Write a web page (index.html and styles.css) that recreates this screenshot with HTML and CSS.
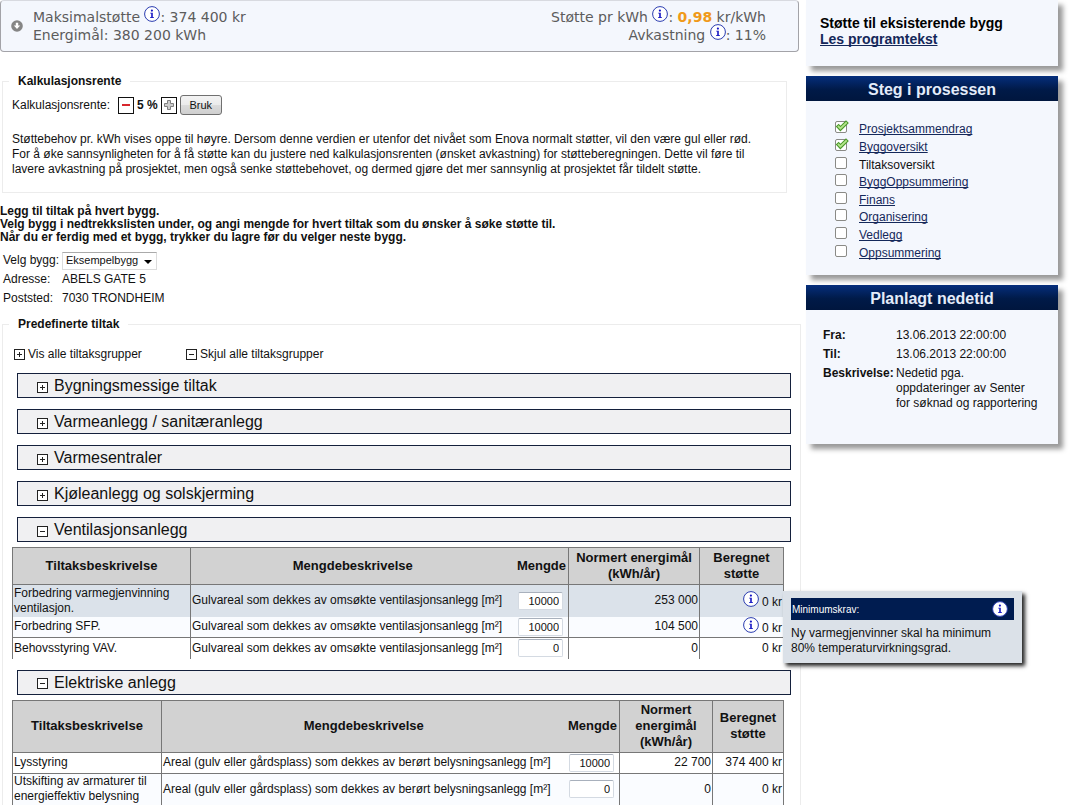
FILE: index.html
```html
<!DOCTYPE html>
<html lang="no">
<head>
<meta charset="utf-8">
<title>Tiltaksoversikt</title>
<link rel="stylesheet" href="styles.css">
</head>
<body>
<svg class="defs" aria-hidden="true">
  <symbol id="info" viewBox="0 0 16 16">
    <circle cx="8" cy="8" r="7.4" fill="#fff" stroke="#2a3cb0" stroke-width="1"/>
    <circle cx="7.9" cy="4.6" r="1.1" fill="#1414c4"/>
    <path d="M6.2 6.7H8.8V11.2H10V12H6V11.2H7.2V7.5H6.2Z" fill="#1414c4"/>
  </symbol>
  <symbol id="plus" viewBox="0 0 11 11">
    <rect x=".5" y=".5" width="10" height="10" fill="#fff" stroke="#222"/>
    <path d="M3 5.5H8M5.5 3V8" stroke="#222"/>
  </symbol>
  <symbol id="minus" viewBox="0 0 11 11">
    <rect x=".5" y=".5" width="10" height="10" fill="#fff" stroke="#222"/>
    <path d="M3 5.5H8" stroke="#222"/>
  </symbol>
  <symbol id="tick" viewBox="0 0 14 12">
    <path d="M2.2 5.2 5.4 8.6 12.4 1.6" fill="none" stroke="#4c9a2c" stroke-width="4"/>
    <path d="M2.9 5.9 5.4 8.4 11.7 2.3" fill="none" stroke="#b5e68c" stroke-width="1.8"/>
  </symbol>
</svg>

<main class="main">
  <section class="summary">
    <svg class="summary-toggle" viewBox="0 0 12 12"><circle cx="6" cy="6" r="5.8" fill="#858585"/><path d="M4.8 2.8H7.2V5.4H9.2L6 9 2.8 5.4H4.8Z" fill="#fff"/></svg>
    <div class="summary-left">
      <div>Maksimalstøtte <svg class="info"><use href="#info"/></svg>: 374 400 kr</div>
      <div>Energimål: 380 200 kWh</div>
    </div>
    <div class="summary-right">
      <div>Støtte pr kWh <svg class="info"><use href="#info"/></svg>: <strong class="rate">0,98</strong> kr/kWh</div>
      <div>Avkastning <svg class="info"><use href="#info"/></svg>: 11%</div>
    </div>
  </section>

  <fieldset class="box box-rate">
    <legend>Kalkulasjonsrente</legend>
    <div class="rate-row">
      <span class="rate-label">Kalkulasjonsrente:</span>
      <button class="step" type="button" aria-label="Reduser"><svg viewBox="0 0 14 14"><path d="M3 7H11" stroke="#d8262c" stroke-width="2"/></svg></button>
      <strong>5 %</strong>
      <button class="step" type="button" aria-label="Øk"><svg viewBox="0 0 14 14"><path d="M5.5 2.5H8.5V5.5H11.5V8.5H8.5V11.5H5.5V8.5H2.5V5.5H5.5Z" fill="#ccc" stroke="#808080"/></svg></button>
      <button class="apply" type="button">Bruk</button>
    </div>
    <p class="help">Støttebehov pr. kWh vises oppe til høyre. Dersom denne verdien er utenfor det nivået som Enova normalt støtter, vil den være gul eller rød.<br>For å øke sannsynligheten for å få støtte kan du justere ned kalkulasjonsrenten (ønsket avkastning) for støtteberegningen. Dette vil føre til<br>lavere avkastning på prosjektet, men også senke støttebehovet, og dermed gjøre det mer sannsynlig at prosjektet får tildelt støtte.</p>
  </fieldset>

  <p class="intro">Legg til tiltak på hvert bygg.<br>Velg bygg i nedtrekkslisten under, og angi mengde for hvert tiltak som du ønsker å søke støtte til.<br>Når du er ferdig med et bygg, trykker du lagre før du velger neste bygg.</p>

  <div class="building">
    <label for="bygg">Velg bygg:</label>
    <span class="select"><select id="bygg"><option>Eksempelbygg</option></select></span>
    <span>Adresse:</span><span>ABELS GATE 5</span>
    <span>Poststed:</span><span>7030 TRONDHEIM</span>
  </div>

  <fieldset class="box box-measures">
    <legend>Predefinerte tiltak</legend>
    <div class="toggle-all">
      <button type="button"><svg class="pm"><use href="#plus"/></svg>Vis alle tiltaksgrupper</button>
      <button type="button"><svg class="pm"><use href="#minus"/></svg>Skjul alle tiltaksgrupper</button>
    </div>
    <div class="groups">
      <button class="group" type="button"><svg class="pm"><use href="#plus"/></svg>Bygningsmessige tiltak</button>
      <button class="group" type="button"><svg class="pm"><use href="#plus"/></svg>Varmeanlegg / sanitæranlegg</button>
      <button class="group" type="button"><svg class="pm"><use href="#plus"/></svg>Varmesentraler</button>
      <button class="group" type="button"><svg class="pm"><use href="#plus"/></svg>Kjøleanlegg og solskjerming</button>
      <button class="group" type="button"><svg class="pm"><use href="#minus"/></svg>Ventilasjonsanlegg</button>
    </div>

    <table class="measures vent">
      <colgroup><col class="c-name"><col><col class="c-qty"><col class="c-goal"><col class="c-sum"></colgroup>
      <thead>
        <tr><th>Tiltaksbeskrivelse</th><th class="wide">Mengdebeskrivelse</th><th class="qty">Mengde</th><th>Normert energimål (kWh/år)</th><th>Beregnet støtte</th></tr>
      </thead>
      <tbody>
        <tr class="tall active">
          <td>Forbedring varmegjenvinning ventilasjon.</td>
          <td><label for="q1">Gulvareal som dekkes av omsøkte ventilasjonsanlegg [m²]</label></td>
          <td class="qty"><input id="q1" type="text" value="10000"></td>
          <td class="num">253 000</td>
          <td class="num tip-host"><svg class="info"><use href="#info"/></svg> 0 kr
            <div class="tip" role="tooltip">
              <div class="tip-head"><span>Minimumskrav:</span><svg class="tip-info"><use href="#info"/></svg></div>
              <p>Ny varmegjenvinner skal ha minimum 80% temperaturvirkningsgrad.</p>
            </div>
          </td>
        </tr>
        <tr class="alt joined">
          <td>Forbedring SFP.</td>
          <td><label for="q2">Gulvareal som dekkes av omsøkte ventilasjonsanlegg [m²]</label></td>
          <td class="qty"><input id="q2" type="text" value="10000"></td>
          <td class="num">104 500</td>
          <td class="num"><svg class="info"><use href="#info"/></svg> 0 kr</td>
        </tr>
        <tr class="last">
          <td>Behovsstyring VAV.</td>
          <td><label for="q3">Gulvareal som dekkes av omsøkte ventilasjonsanlegg [m²]</label></td>
          <td class="qty"><input id="q3" type="text" value="0"></td>
          <td class="num">0</td>
          <td class="num">0 kr</td>
        </tr>
      </tbody>
    </table>

    <div class="groups">
      <button class="group" type="button"><svg class="pm"><use href="#minus"/></svg>Elektriske anlegg</button>
    </div>

    <table class="measures elek">
      <colgroup><col class="c-name"><col><col class="c-qty"><col class="c-goal"><col class="c-sum"></colgroup>
      <thead>
        <tr><th>Tiltaksbeskrivelse</th><th class="wide">Mengdebeskrivelse</th><th class="qty">Mengde</th><th>Normert energimål (kWh/år)</th><th>Beregnet støtte</th></tr>
      </thead>
      <tbody>
        <tr>
          <td>Lysstyring</td>
          <td><label for="q4">Areal (gulv eller gårdsplass) som dekkes av berørt belysningsanlegg [m²]</label></td>
          <td class="qty"><input id="q4" type="text" value="10000"></td>
          <td class="num">22 700</td>
          <td class="num">374 400 kr</td>
        </tr>
        <tr class="tall alt last">
          <td>Utskifting av armaturer til energieffektiv belysning</td>
          <td><label for="q5">Areal (gulv eller gårdsplass) som dekkes av berørt belysningsanlegg [m²]</label></td>
          <td class="qty"><input id="q5" type="text" value="0"></td>
          <td class="num">0</td>
          <td class="num">0 kr</td>
        </tr>
      </tbody>
    </table>
  </fieldset>
</main>

<aside class="side">
  <section class="panel program">
    <strong>Støtte til eksisterende bygg</strong>
    <a href="#">Les programtekst</a>
  </section>

  <section class="panel">
    <h2>Steg i prosessen</h2>
    <ul class="steps">
      <li><span class="check"><input type="checkbox" id="s1" aria-label="Prosjektsammendrag" checked><svg><use href="#tick"/></svg></span><a href="#">Prosjektsammendrag</a></li>
      <li><span class="check"><input type="checkbox" id="s2" aria-label="Byggoversikt" checked><svg><use href="#tick"/></svg></span><a href="#">Byggoversikt</a></li>
      <li><span class="check"><input type="checkbox" id="s3"></span><label for="s3">Tiltaksoversikt</label></li>
      <li><span class="check"><input type="checkbox" id="s4" aria-label="ByggOppsummering"></span><a href="#">ByggOppsummering</a></li>
      <li><span class="check"><input type="checkbox" id="s5" aria-label="Finans"></span><a href="#">Finans</a></li>
      <li><span class="check"><input type="checkbox" id="s6" aria-label="Organisering"></span><a href="#">Organisering</a></li>
      <li><span class="check"><input type="checkbox" id="s7" aria-label="Vedlegg"></span><a href="#">Vedlegg</a></li>
      <li><span class="check"><input type="checkbox" id="s8" aria-label="Oppsummering"></span><a href="#">Oppsummering</a></li>
    </ul>
  </section>

  <section class="panel">
    <h2>Planlagt nedetid</h2>
    <dl class="downtime">
      <dt>Fra:</dt><dd>13.06.2013 22:00:00</dd>
      <dt>Til:</dt><dd>13.06.2013 22:00:00</dd>
      <dt>Beskrivelse:</dt><dd>Nedetid pga.<br>oppdateringer av Senter<br>for søknad og rapportering</dd>
    </dl>
  </section>
</aside>
</body>
</html>
```
FILE: styles.css
```css
* { box-sizing: border-box; }

body {
  margin: 0;
  display: flex;
  align-items: flex-start;
  gap: 5px;
  padding-right: 15px;
  background: #fff;
  color: #111;
  font: 12px/15px "Liberation Sans", Arial, sans-serif;
}

button, input, select { font: inherit; color: inherit; }
p, h2, ul, dl, dd { margin: 0; padding: 0; }
a { color: #14285a; text-decoration-skip-ink: none; }
.defs { position: absolute; width: 0; height: 0; }
.info { width: 16px; height: 16px; vertical-align: -1px; }
.pm { width: 11px; height: 11px; flex: none; }

.main { flex: 1; min-width: 0; }

/* Summary bar */
.summary {
  display: flex;
  align-items: center;
  height: 52px;
  margin-right: 2px;
  padding: 0 32px 0 10px;
  background: #f4f7fd;
  border: 1px solid #a3a3a8;
  border-top-color: #d8dae0;
  border-radius: 4px;
  color: #5c5c5c;
  font: 14px/18px "DejaVu Sans", Verdana, sans-serif;
}
.summary-toggle { width: 12px; height: 12px; margin-right: 10px; }
.summary-left { flex: 1; }
.summary-right { text-align: right; }
.rate { color: #f09a1a; }
.summary .info { vertical-align: 0; margin: -4px 0 0; }

/* Fieldsets */
.box {
  min-width: 0;
  margin: 0;
  border: 1px solid #ececec;
}
.box legend { margin-left: -3px; padding: 0 9px; font-weight: bold; }
.box-rate { margin: 22px 14px 0 2px; padding: 6px 9px 15px; }
.rate-row { display: flex; align-items: center; gap: 3px; height: 20px; }
.rate-label { margin-right: 5px; }
.step {
  width: 16px;
  height: 17px;
  padding: 0;
  border: 1px solid #111;
  background: #fff;
}
.step svg { display: block; width: 14px; height: 14px; }
.apply {
  width: 42px;
  height: 20px;
  padding: 0;
  border: 1px solid #707070;
  border-radius: 3px;
  background: linear-gradient(#f3f3f3, #ebebeb 50%, #dcdcdc 50%, #cfcfcf);
  font-size: 11px;
}
.help { margin-top: 17px; }

.intro { margin-top: 12px; font-weight: bold; line-height: 13px; }

.building {
  display: grid;
  grid-template-columns: 55px 1fr;
  column-gap: 4px;
  grid-auto-rows: 19px;
  align-items: center;
  margin: 7px 0 9px 3px;
  white-space: nowrap;
}
.select { position: relative; width: 95px; height: 18px; }
.select select {
  appearance: none;
  width: 100%;
  height: 18px;
  padding: 0 4px 0 3px;
  border: 1px solid #dcdcdc;
  border-top-color: #aaa;
  background: #fff;
  font-size: 11px;
}
.select::after {
  content: "";
  position: absolute;
  right: 5px;
  top: 8px;
  border: 4px solid transparent;
  border-top-color: #000;
  pointer-events: none;
}

/* Measures */
.box-measures { margin-left: 2px; padding: 0 9px; border-bottom: 0; }
.toggle-all {
  display: grid;
  grid-template-columns: 172px 1fr;
  margin: 15px 0 11px 2px;
}
.toggle-all button, .group {
  display: flex;
  align-items: center;
  border: 0;
  background: none;
  padding: 0;
}
.toggle-all button { gap: 3px; }
.groups { display: grid; gap: 11px; margin: 0 0 0 5px; }
.group {
  gap: 6px;
  height: 25px;
  padding: 0 19px;
  border: 1px solid #14203c;
  background: #f0f0f2;
  font-size: 16px;
}
.group .pm { margin-top: 3px; }

.measures {
  width: calc(100% - 7px);
  margin: 5px 0 11px;
  table-layout: fixed;
  border-collapse: collapse;
  border: 1px solid #777;
  border-bottom: 0;
}
.vent .c-name { width: 178px; }
.vent .c-goal { width: 131px; }
.vent .c-sum { width: 84px; }
.elek .c-name { width: 149px; }
.elek .c-goal { width: 93px; }
.elek .c-sum { width: 71px; }
.c-qty { width: 54px; }
.measures th {
  padding: 2px 1px;
  background: #d2d2d2;
  border: 1px solid #777;
  font-size: 13px;
  line-height: 16px;
}
.measures.elek th { padding: 1px 1px 2px; }
.measures td {
  height: 21px;
  padding: 0 1px;
  border: 1px solid #777;
}
.measures .tall td { height: 32px; }
.measures th.wide, .measures td:nth-child(2) { border-right: 0; white-space: nowrap; }
.measures .qty { border-left: 0; text-align: right; }
.measures th.qty { padding-right: 2px; }
.measures td.qty { padding-right: 5px; }
.measures td.num { text-align: right; white-space: nowrap; }
.measures .last td { border-bottom: 0; }
.measures .active td { background: #dbe2ea; border-bottom: 0; }
.alt td { background: #fafcff; }
.measures .joined td { border-top: 0; }
.measures input {
  display: block;
  width: 45px;
  height: 18px;
  margin-left: auto;
  padding: 0 3px;
  border: 1px solid #d4dae2;
  border-top-color: #a8b0bc;
  border-radius: 2px;
  background: #fff;
  font-size: 11px;
  text-align: right;
}

/* Tooltip */
.tip-host { position: relative; }
.tip {
  position: absolute;
  z-index: 2;
  left: 100%;
  top: 6px;
  width: 239px;
  padding: 7px 8px;
  background: #dbe1e8;
  box-shadow: 3px 3px 4px #222;
  text-align: left;
  white-space: normal;
}
.tip-head {
  display: flex;
  align-items: center;
  justify-content: space-between;
  height: 22px;
  margin-bottom: 6px;
  padding: 0 6px 0 1px;
  background: #001c50;
  color: #fff;
  font-size: 10px;
}
.tip-info { width: 16px; height: 16px; }

/* Side column */
.side { flex: none; width: 252px; display: grid; gap: 10px; }
.panel { background: #f4f7fd; box-shadow: 5px 5px 5px #999; }
.program {
  display: grid;
  align-content: start;
  height: 66px;
  padding: 15px 14px;
  font-size: 14px;
  line-height: 16px;
  font-weight: bold;
}
.program strong { color: #000; }
.program a { justify-self: start; }
.panel h2 {
  height: 25px;
  background: linear-gradient(#052e7c, #001a48 55%, #00163e);
  color: #e4ecfa;
  font-size: 16px;
  line-height: 27px;
  text-align: center;
}
.steps {
  display: grid;
  grid-auto-rows: 1fr;
  height: 161px;
  margin-bottom: 13px;
  padding: 20px 0 0 29px;
  list-style: none;
}
.steps li { display: flex; align-items: center; gap: 12px; }
.check { position: relative; width: 12px; height: 12px; margin-bottom: 5px; }
.check input {
  appearance: none;
  display: block;
  width: 12px;
  height: 12px;
  margin: 0;
  border: 1px solid #8a8a86;
  border-radius: 2px;
  background: #fff;
}
.check svg { position: absolute; left: 0; top: -1px; width: 14px; height: 12px; pointer-events: none; }
.downtime {
  display: grid;
  grid-template-columns: 70px 1fr;
  column-gap: 3px;
  row-gap: 4px;
  padding: 18px 14px 33px 17px;
}
.downtime dt { font-weight: bold; white-space: nowrap; }
```
